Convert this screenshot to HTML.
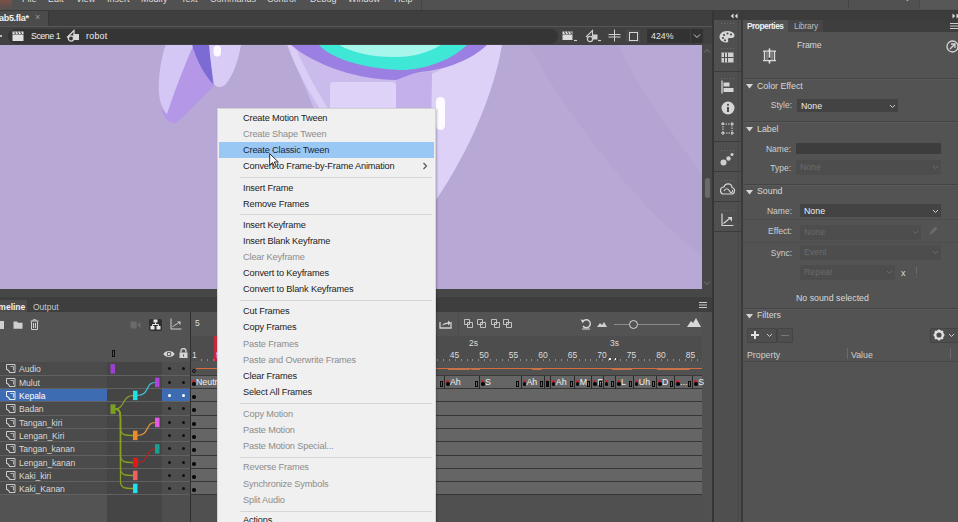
<!DOCTYPE html>
<html><head><meta charset="utf-8">
<style>
*{margin:0;padding:0;box-sizing:border-box}
html,body{width:958px;height:522px;overflow:hidden;background:#535353;font-family:"Liberation Sans",sans-serif;color:#d6d6d6}
.a{position:absolute}
.t{position:absolute;white-space:nowrap;line-height:1}
</style></head><body>


<!-- menu bar -->
<div class="a" style="left:0;top:0;width:958px;height:10px;background:#515151;overflow:hidden">
 <div class="a" style="left:0;top:0;width:12px;height:9px;background:linear-gradient(#7a5048,#55504e)"></div>
 <div class="t" style="left:22px;top:-5px;font-size:9px;color:#dedede">File</div>
 <div class="t" style="left:48px;top:-5px;font-size:9px;color:#dedede">Edit</div>
 <div class="t" style="left:76px;top:-5px;font-size:9px;color:#dedede">View</div>
 <div class="t" style="left:107px;top:-5px;font-size:9px;color:#dedede">Insert</div>
 <div class="t" style="left:141px;top:-5px;font-size:9px;color:#dedede">Modify</div>
 <div class="t" style="left:181px;top:-5px;font-size:9px;color:#dedede">Text</div>
 <div class="t" style="left:210px;top:-5px;font-size:9px;color:#dedede">Commands</div>
 <div class="t" style="left:267px;top:-5px;font-size:9px;color:#dedede">Control</div>
 <div class="t" style="left:310px;top:-5px;font-size:9px;color:#dedede">Debug</div>
 <div class="t" style="left:348px;top:-5px;font-size:9px;color:#dedede">Window</div>
 <div class="t" style="left:394px;top:-5px;font-size:9px;color:#dedede">Help</div>
 <div class="a" style="left:421px;top:0;width:1px;height:10px;background:#444"></div>
 <div class="a" style="left:848px;top:0;width:1px;height:8px;background:#444"></div>
 <div class="t" style="left:858px;top:-7px;font-size:9px;color:#e8e8e8;font-weight:bold">Essentials</div>
 <div class="t" style="left:904px;top:-5px;font-size:8px;color:#bbb">&#8964;</div>
 <div class="a" style="left:919px;top:0;width:39px;height:9px;background:#575757;border-left:1px solid #4a4a4a"></div>
</div>
<div class="a" style="left:0;top:10px;width:958px;height:1px;background:#3a3a3a"></div>

<!-- doc tab bar -->
<div class="a" style="left:0;top:11px;width:712px;height:15px;background:#3f3f3f"></div>
<div class="a" style="left:0;top:11px;width:48px;height:15px;background:#4b4b4b"></div>
<div class="a" style="left:48px;top:11px;width:1px;height:15px;background:#383838"></div>
<div class="t" style="left:-1px;top:14.2px;font-size:9px;color:#f0f0f0;font-weight:bold;letter-spacing:-0.3px">ab5.fla*</div>
<div class="t" style="left:35px;top:13px;font-size:9px;color:#9a9a9a">&#215;</div>
<!-- tool strip top -->
<div class="a" style="left:712px;top:11px;width:246px;height:9px;background:#3c3c3c"></div>
<svg class="a" style="left:730px;top:12.5px" width="8" height="6" viewBox="0 0 8 6"><path d="M3.5 0.5L0.8 3l2.7 2.5zM7.5 0.5L4.8 3l2.7 2.5z" fill="#e0e0e0"/></svg>
<svg class="a" style="left:952px;top:12.5px" width="8" height="6" viewBox="0 0 8 6"><path d="M0.5 0.5L3.2 3 0.5 5.5zM4.5 0.5L7.2 3 4.5 5.5z" fill="#e0e0e0"/></svg>

<!-- breadcrumb bar -->
<div class="a" style="left:0;top:26px;width:712px;height:1px;background:#575757"></div>
<div class="a" style="left:0;top:27px;width:712px;height:17.5px;background:#414141"></div>
<div class="a" style="left:8px;top:28.5px;width:550px;height:15px;background:#353535;border-radius:8px"></div>
<div class="a" style="left:0;top:35px;width:2px;height:2px;background:#bbb"></div>
<svg class="a" style="left:12px;top:30px" width="12" height="12" viewBox="0 0 12 12">
 <path d="M0.5 4.5h11v6.5h-11z" fill="#e0e0e0"/>
 <path d="M0.5 1.5h11v2.5h-11z" fill="#e0e0e0"/>
 <path d="M2.5 1.5l1 2.5M5.5 1.5l1 2.5M8.5 1.5l1 2.5" stroke="#3a3a3a" stroke-width="1"/>
</svg>
<div class="t" style="left:31px;top:31.5px;font-size:8.8px;color:#f0f0f0;letter-spacing:-0.45px">Scene 1</div>
<svg class="a" style="left:66px;top:29px" width="14" height="13" viewBox="0 0 14 13">
 <path d="M1 8.5L8 1.5v6" fill="none" stroke="#d8d8d8" stroke-width="1.2"/>
 <circle cx="5" cy="9.5" r="2.6" fill="none" stroke="#d8d8d8" stroke-width="1.3"/>
 <path d="M7.5 5h5.5v6h-5.5z" fill="#d8d8d8"/>
</svg>
<div class="t" style="left:86px;top:31.5px;font-size:8.8px;color:#f0f0f0;letter-spacing:0.3px">robot</div>

<!-- stage header right icons -->
<svg class="a" style="left:561px;top:29px" width="17" height="14" viewBox="0 0 17 14">
 <path d="M1.5 5.5h10v5.5h-10z" fill="#dcdcdc"/>
 <path d="M1.5 2.5h10v2.5h-10z" fill="#dcdcdc"/>
 <path d="M3.5 2.5l1 2.5M6.5 2.5l1 2.5M9.5 2.5l1 2.5" stroke="#3a3a3a" stroke-width="1"/>
 <path d="M13 11.5h3" stroke="#d0d0d0" stroke-width="1.2"/>
</svg>
<svg class="a" style="left:585px;top:29px" width="17" height="14" viewBox="0 0 17 14">
 <path d="M1 8L7.5 1.5v6" fill="none" stroke="#d0d0d0" stroke-width="1.1"/>
 <circle cx="5" cy="10" r="2.6" fill="none" stroke="#d0d0d0" stroke-width="1.2"/>
 <path d="M7.5 5.5h5v5h-5z" fill="#d0d0d0"/>
 <path d="M13 11.5h3" stroke="#d0d0d0" stroke-width="1.2"/>
</svg>
<svg class="a" style="left:608px;top:29px" width="13" height="13" viewBox="0 0 13 13">
 <path d="M0.5 5.5h12M0.5 8h12M6.5 0.5v12" stroke="#d0d0d0" stroke-width="1"/>
</svg>
<div class="a" style="left:626px;top:30px;width:14px;height:12px;background:#4a4a4a"></div>
<div class="a" style="left:628.5px;top:32px;width:9px;height:8.5px;border:1.2px solid #d6d6d6;background:#444"></div>
<div class="a" style="left:647px;top:29px;width:56px;height:14px;background:#323232"></div>
<div class="a" style="left:690px;top:29px;width:1px;height:14px;background:#3e3e3e"></div>
<div class="t" style="left:651px;top:32px;font-size:8.8px;color:#e6e6e6">424%</div>
<svg class="a" style="left:693px;top:33px" width="8" height="6" viewBox="0 0 8 6"><path d="M1 1.5l3 3 3-3" fill="none" stroke="#cfcfcf" stroke-width="1"/></svg>

<!-- stage -->
<div class="a" style="left:0;top:44.5px;width:702px;height:244.5px;background:#b8a8d6;overflow:hidden">
<svg class="a" style="left:0;top:-0.5px" width="702" height="245" viewBox="0 44 702 245">
 <path d="M528 44 C570 120 640 210 702 255 L702 175 C670 130 640 90 617 44Z" fill="#b4a4d4"/>
 <!-- left limb -->
 <path d="M184 44 L228 44 L214 86 C200 100 186 114 176 123 C169 124 164 118 162 110 Z" fill="#b597e7"/>
 <path d="M166 44 L194 44 C186 62 177 84 167 114 C160 107 158 95 159 80 C160 65 163 52 166 44 Z" fill="#d5c7f5"/>
 <path d="M192 44 L210 44 L213 84 C204 74 196 60 192 44Z" fill="#7c6ad5"/>
 <path d="M209 44 L241 44 C239 58 234 74 226 84 C222 88 216 88 214 84 C212 72 210 58 209 44 Z" fill="#d8ccf7"/>
 <rect x="213.5" y="45.5" width="7.5" height="11" rx="3.7" fill="#fbf8ff"/>
 <!-- body -->
 <path d="M287 44 L502 44 C495 90 470 150 436 200 L350 200 C335 160 315 110 287 44Z" fill="#cbbaec"/>
 <path d="M287 44 L294 44 C305 70 318 92 330 112 L322 112 C308 90 296 70 287 44Z" fill="#dacdf6"/>
 <path d="M432 74 C452 64 472 52 478 44 L502 44 C495 90 470 150 436 200 L430 200 C430 150 430 100 432 74Z" fill="#ddd1f7"/>
 <path d="M396 74 L432 72 L430 200 L396 200Z" fill="#c4b0ea"/>
 <path d="M334 82 L392 82 Q396 82 396 86 L396 200 L330 200 L330 86 Q330 82 334 82Z" fill="#ded2f8"/>
 <!-- ring -->
 <path d="M290 44 L488 44 C472 60 445 70 420 72 C410 74 402 78 396 80 C360 80 315 66 290 44Z" fill="#9b7fe3"/>
 <path d="M318 44 L468 44 C452 60 425 70 400 70 C360 68 330 58 318 44Z" fill="#3fe8d6"/>
 <path d="M338 44 L442 44 C430 52 415 57 395 57 C370 57 350 52 338 44Z" fill="#a6f6ec"/>
 <rect x="436" y="97" width="9" height="33" rx="4.5" fill="#fdfbff"/>
</svg>
</div>

<!-- v scroll -->
<div class="a" style="left:702px;top:44px;width:10px;height:245px;background:#474747"></div>
<svg class="a" style="left:703px;top:48px" width="8" height="6" viewBox="0 0 8 6"><path d="M1 4.5l3-3 3 3" fill="none" stroke="#777" stroke-width="1"/></svg>
<div class="a" style="left:704.5px;top:178px;width:5px;height:20px;background:#6a6a6a;border-radius:2.5px"></div>
<svg class="a" style="left:703px;top:280px" width="8" height="6" viewBox="0 0 8 6"><path d="M1 1.5l3 3 3-3" fill="none" stroke="#777" stroke-width="1"/></svg>
<!-- timeline panel -->
<div class="a" style="left:0;top:289px;width:712px;height:8px;background:#474747"></div>
<div class="a" style="left:0;top:297px;width:712px;height:15px;background:#3e3e3e"></div>
<div class="a" style="left:0;top:300px;width:27px;height:12px;background:#4c4c4c"></div>
<div class="t" style="left:-4px;top:302.5px;font-size:8.5px;color:#f2f2f2;font-weight:bold">imeline</div>
<div class="t" style="left:33px;top:302.5px;font-size:8.5px;color:#c8c8c8">Output</div>
<div class="a" style="left:699px;top:302px;width:8px;height:1.2px;background:#ccc;box-shadow:0 2.5px 0 #ccc,0 5px 0 #ccc"></div>
<div class="a" style="left:0;top:312px;width:712px;height:210px;background:#535353"></div>
<div class="a" style="left:702px;top:312px;width:10px;height:210px;background:#515151"></div>
<div class="a" style="left:0;top:321px;width:4px;height:8px;background:#cfcfcf"></div>
<svg class="a" style="left:13px;top:320px" width="10" height="9" viewBox="0 0 10 9"><path d="M0.5 1.5h3.5l1 1.2h4.5v6H0.5z" fill="#cfcfcf"/></svg>
<svg class="a" style="left:30px;top:319px" width="9" height="11" viewBox="0 0 9 11"><path d="M0.5 2h8M3 2V0.8h3V2M1.5 2.5v8h6v-8M3.5 4v5M5.5 4v5" fill="none" stroke="#cfcfcf" stroke-width="1"/></svg>
<svg class="a" style="left:130px;top:321px" width="11" height="8" viewBox="0 0 11 8"><path d="M0.5 0.5h6v7h-6zM7 4l3.5-3v6z" fill="#6a6a6a"/></svg>
<div class="a" style="left:149px;top:318.5px;width:13px;height:12.5px;background:#2e2e2e;border-radius:2px"></div>
<svg class="a" style="left:150px;top:319px" width="11" height="11" viewBox="0 0 11 11"><path d="M3.5 0.5h4v3h-4zM0.5 7h4v3.5h-4zM6.5 7h4v3.5h-4z" fill="#e8e8e8"/><path d="M5.5 3.5v2M2.5 7V5.5h6V7" fill="none" stroke="#e8e8e8" stroke-width="1"/></svg>
<svg class="a" style="left:170px;top:318px" width="12" height="12" viewBox="0 0 12 12"><path d="M1 0.5v10.5h10.5" fill="none" stroke="#cfcfcf" stroke-width="1"/><path d="M2.5 9C4 7 6 6.5 8 5.5" fill="none" stroke="#cfcfcf" stroke-width="1"/><path d="M7 3.5h3.5V7z" fill="#cfcfcf"/></svg>
<div class="a" style="left:190px;top:312px;width:1px;height:210px;background:#2f2f2f"></div>
<div class="t" style="left:195px;top:319px;font-size:8.5px;color:#dcdcdc">5</div>
<svg class="a" style="left:439px;top:318px" width="13" height="11" viewBox="0 0 13 11"><path d="M1 4v6h11V4" fill="none" stroke="#cfcfcf" stroke-width="1.3"/><path d="M3 8C4 5 6 4.5 9 4.5V2.5l3 2.5-3 2.5V6C7 6 5 6.5 3 8z" fill="#cfcfcf"/></svg>
<div class="a" style="left:458px;top:313px;width:1px;height:22px;background:#4a4a4a"></div>
<svg class="a" style="left:464px;top:319px" width="9" height="9" viewBox="0 0 9 9"><path d="M0.5 0.5h5v5h-5zM3.5 3.5h5v5h-5z" fill="none" stroke="#cfcfcf" stroke-width="0.9"/></svg>
<svg class="a" style="left:477px;top:319px" width="9" height="9" viewBox="0 0 9 9"><path d="M0.5 0.5h5v5h-5zM3.5 3.5h5v5h-5z" fill="none" stroke="#cfcfcf" stroke-width="0.9"/></svg>
<svg class="a" style="left:491px;top:319px" width="9" height="9" viewBox="0 0 9 9"><path d="M0.5 0.5h5v5h-5zM3.5 3.5h5v5h-5z" fill="none" stroke="#cfcfcf" stroke-width="0.9"/></svg>
<svg class="a" style="left:503px;top:319px" width="9" height="9" viewBox="0 0 9 9"><path d="M0.5 0.5h5v5h-5zM3.5 3.5h5v5h-5z" fill="none" stroke="#cfcfcf" stroke-width="0.9"/></svg>
<svg class="a" style="left:580px;top:317px" width="12" height="13" viewBox="0 0 12 13"><path d="M3 4.5A4 4 0 1 1 3 9" fill="none" stroke="#d6d6d6" stroke-width="1.4"/><path d="M0.5 2.5l3.5 0.5-1 3.5z" fill="#d6d6d6"/><path d="M2 12h8" stroke="#d6d6d6" stroke-width="1"/></svg>
<svg class="a" style="left:597px;top:321px" width="10" height="6" viewBox="0 0 10 6"><path d="M0 6L3 2l2 2 2-3 3 5z" fill="#cfcfcf"/></svg>
<div class="a" style="left:614px;top:323.5px;width:66px;height:1.2px;background:#8a8a8a"></div>
<div class="a" style="left:628.5px;top:319.5px;width:9px;height:9px;border-radius:50%;border:1.6px solid #d8d8d8;background:#535353"></div>
<svg class="a" style="left:687px;top:318px" width="14" height="9" viewBox="0 0 14 9"><path d="M0 9L4 3l2 2 3-5 5 9z" fill="#d8d8d8"/></svg>
<div class="a" style="left:191px;top:336px;width:511px;height:25px;background:#4d4d4d"></div>
<div class="t" style="left:469px;top:339px;font-size:8.5px;color:#dcdcdc">2s</div>
<div class="t" style="left:610px;top:339px;font-size:8.5px;color:#dcdcdc">3s</div>
<div class="t" style="left:192px;top:351px;font-size:8.5px;color:#dcdcdc">1</div>
<div class="t" style="left:449.7px;top:351px;font-size:8.5px;color:#dcdcdc">45</div>
<div class="t" style="left:479.2px;top:351px;font-size:8.5px;color:#dcdcdc">50</div>
<div class="t" style="left:508.7px;top:351px;font-size:8.5px;color:#dcdcdc">55</div>
<div class="t" style="left:538.2px;top:351px;font-size:8.5px;color:#dcdcdc">60</div>
<div class="t" style="left:567.7px;top:351px;font-size:8.5px;color:#dcdcdc">65</div>
<div class="t" style="left:597.2px;top:351px;font-size:8.5px;color:#dcdcdc">70</div>
<div class="t" style="left:626.7px;top:351px;font-size:8.5px;color:#dcdcdc">75</div>
<div class="t" style="left:656.2px;top:351px;font-size:8.5px;color:#dcdcdc">80</div>
<div class="t" style="left:685.7px;top:351px;font-size:8.5px;color:#dcdcdc">85</div>
<div class="a" style="left:201.0px;top:359px;width:1px;height:1.5px;background:#8c8c8c"></div><div class="a" style="left:206.9px;top:359px;width:1px;height:1.5px;background:#8c8c8c"></div><div class="a" style="left:212.8px;top:359px;width:1px;height:1.5px;background:#8c8c8c"></div><div class="a" style="left:218.7px;top:359px;width:1px;height:1.5px;background:#8c8c8c"></div><div class="a" style="left:224.6px;top:359px;width:1px;height:1.5px;background:#8c8c8c"></div><div class="a" style="left:230.5px;top:359px;width:1px;height:1.5px;background:#8c8c8c"></div><div class="a" style="left:236.4px;top:359px;width:1px;height:1.5px;background:#8c8c8c"></div><div class="a" style="left:242.3px;top:359px;width:1px;height:1.5px;background:#8c8c8c"></div><div class="a" style="left:248.2px;top:359px;width:1px;height:1.5px;background:#8c8c8c"></div><div class="a" style="left:254.1px;top:359px;width:1px;height:1.5px;background:#8c8c8c"></div><div class="a" style="left:260.0px;top:359px;width:1px;height:1.5px;background:#8c8c8c"></div><div class="a" style="left:265.9px;top:359px;width:1px;height:1.5px;background:#8c8c8c"></div><div class="a" style="left:271.8px;top:359px;width:1px;height:1.5px;background:#8c8c8c"></div><div class="a" style="left:277.7px;top:359px;width:1px;height:1.5px;background:#8c8c8c"></div><div class="a" style="left:283.6px;top:359px;width:1px;height:1.5px;background:#8c8c8c"></div><div class="a" style="left:289.5px;top:359px;width:1px;height:1.5px;background:#8c8c8c"></div><div class="a" style="left:295.4px;top:359px;width:1px;height:1.5px;background:#8c8c8c"></div><div class="a" style="left:301.3px;top:359px;width:1px;height:1.5px;background:#8c8c8c"></div><div class="a" style="left:307.2px;top:359px;width:1px;height:1.5px;background:#8c8c8c"></div><div class="a" style="left:313.1px;top:359px;width:1px;height:1.5px;background:#8c8c8c"></div><div class="a" style="left:319.0px;top:359px;width:1px;height:1.5px;background:#8c8c8c"></div><div class="a" style="left:324.9px;top:359px;width:1px;height:1.5px;background:#8c8c8c"></div><div class="a" style="left:330.8px;top:359px;width:1px;height:1.5px;background:#8c8c8c"></div><div class="a" style="left:336.7px;top:359px;width:1px;height:1.5px;background:#8c8c8c"></div><div class="a" style="left:342.6px;top:359px;width:1px;height:1.5px;background:#8c8c8c"></div><div class="a" style="left:348.5px;top:359px;width:1px;height:1.5px;background:#8c8c8c"></div><div class="a" style="left:354.4px;top:359px;width:1px;height:1.5px;background:#8c8c8c"></div><div class="a" style="left:360.3px;top:359px;width:1px;height:1.5px;background:#8c8c8c"></div><div class="a" style="left:366.2px;top:359px;width:1px;height:1.5px;background:#8c8c8c"></div><div class="a" style="left:372.1px;top:359px;width:1px;height:1.5px;background:#8c8c8c"></div><div class="a" style="left:378.0px;top:359px;width:1px;height:1.5px;background:#8c8c8c"></div><div class="a" style="left:383.9px;top:359px;width:1px;height:1.5px;background:#8c8c8c"></div><div class="a" style="left:389.8px;top:359px;width:1px;height:1.5px;background:#8c8c8c"></div><div class="a" style="left:395.7px;top:359px;width:1px;height:1.5px;background:#8c8c8c"></div><div class="a" style="left:401.6px;top:359px;width:1px;height:1.5px;background:#8c8c8c"></div><div class="a" style="left:407.5px;top:359px;width:1px;height:1.5px;background:#8c8c8c"></div><div class="a" style="left:413.4px;top:359px;width:1px;height:1.5px;background:#8c8c8c"></div><div class="a" style="left:419.3px;top:359px;width:1px;height:1.5px;background:#8c8c8c"></div><div class="a" style="left:425.2px;top:359px;width:1px;height:1.5px;background:#8c8c8c"></div><div class="a" style="left:431.1px;top:359px;width:1px;height:1.5px;background:#8c8c8c"></div><div class="a" style="left:437.0px;top:359px;width:1px;height:1.5px;background:#8c8c8c"></div><div class="a" style="left:442.9px;top:359px;width:1px;height:1.5px;background:#8c8c8c"></div><div class="a" style="left:448.8px;top:359px;width:1px;height:1.5px;background:#8c8c8c"></div><div class="a" style="left:454.7px;top:359px;width:1px;height:1.5px;background:#8c8c8c"></div><div class="a" style="left:460.6px;top:359px;width:1px;height:1.5px;background:#8c8c8c"></div><div class="a" style="left:466.5px;top:359px;width:1px;height:1.5px;background:#8c8c8c"></div><div class="a" style="left:472.4px;top:359px;width:1px;height:1.5px;background:#8c8c8c"></div><div class="a" style="left:478.3px;top:359px;width:1px;height:1.5px;background:#8c8c8c"></div><div class="a" style="left:484.2px;top:359px;width:1px;height:1.5px;background:#8c8c8c"></div><div class="a" style="left:490.1px;top:359px;width:1px;height:1.5px;background:#8c8c8c"></div><div class="a" style="left:496.0px;top:359px;width:1px;height:1.5px;background:#8c8c8c"></div><div class="a" style="left:501.9px;top:359px;width:1px;height:1.5px;background:#8c8c8c"></div><div class="a" style="left:507.8px;top:359px;width:1px;height:1.5px;background:#8c8c8c"></div><div class="a" style="left:513.7px;top:359px;width:1px;height:1.5px;background:#8c8c8c"></div><div class="a" style="left:519.6px;top:359px;width:1px;height:1.5px;background:#8c8c8c"></div><div class="a" style="left:525.5px;top:359px;width:1px;height:1.5px;background:#8c8c8c"></div><div class="a" style="left:531.4px;top:359px;width:1px;height:1.5px;background:#8c8c8c"></div><div class="a" style="left:537.3px;top:359px;width:1px;height:1.5px;background:#8c8c8c"></div><div class="a" style="left:543.2px;top:359px;width:1px;height:1.5px;background:#8c8c8c"></div><div class="a" style="left:549.1px;top:359px;width:1px;height:1.5px;background:#8c8c8c"></div><div class="a" style="left:555.0px;top:359px;width:1px;height:1.5px;background:#8c8c8c"></div><div class="a" style="left:560.9px;top:359px;width:1px;height:1.5px;background:#8c8c8c"></div><div class="a" style="left:566.8px;top:359px;width:1px;height:1.5px;background:#8c8c8c"></div><div class="a" style="left:572.7px;top:359px;width:1px;height:1.5px;background:#8c8c8c"></div><div class="a" style="left:578.6px;top:359px;width:1px;height:1.5px;background:#8c8c8c"></div><div class="a" style="left:584.5px;top:359px;width:1px;height:1.5px;background:#8c8c8c"></div><div class="a" style="left:590.4px;top:359px;width:1px;height:1.5px;background:#8c8c8c"></div><div class="a" style="left:596.3px;top:359px;width:1px;height:1.5px;background:#8c8c8c"></div><div class="a" style="left:602.2px;top:359px;width:1px;height:1.5px;background:#8c8c8c"></div><div class="a" style="left:608.1px;top:359px;width:1px;height:1.5px;background:#8c8c8c"></div><div class="a" style="left:614.0px;top:359px;width:1px;height:1.5px;background:#8c8c8c"></div><div class="a" style="left:619.9px;top:359px;width:1px;height:1.5px;background:#8c8c8c"></div><div class="a" style="left:625.8px;top:359px;width:1px;height:1.5px;background:#8c8c8c"></div><div class="a" style="left:631.7px;top:359px;width:1px;height:1.5px;background:#8c8c8c"></div><div class="a" style="left:637.6px;top:359px;width:1px;height:1.5px;background:#8c8c8c"></div><div class="a" style="left:643.5px;top:359px;width:1px;height:1.5px;background:#8c8c8c"></div><div class="a" style="left:649.4px;top:359px;width:1px;height:1.5px;background:#8c8c8c"></div><div class="a" style="left:655.3px;top:359px;width:1px;height:1.5px;background:#8c8c8c"></div><div class="a" style="left:661.2px;top:359px;width:1px;height:1.5px;background:#8c8c8c"></div><div class="a" style="left:667.1px;top:359px;width:1px;height:1.5px;background:#8c8c8c"></div><div class="a" style="left:673.0px;top:359px;width:1px;height:1.5px;background:#8c8c8c"></div><div class="a" style="left:678.9px;top:359px;width:1px;height:1.5px;background:#8c8c8c"></div><div class="a" style="left:684.8px;top:359px;width:1px;height:1.5px;background:#8c8c8c"></div><div class="a" style="left:690.7px;top:359px;width:1px;height:1.5px;background:#8c8c8c"></div><div class="a" style="left:696.6px;top:359px;width:1px;height:1.5px;background:#8c8c8c"></div>
<div class="a" style="left:609px;top:358px;width:1.5px;height:2px;background:#f0f0f0"></div><div class="a" style="left:614.5px;top:358px;width:1.5px;height:2px;background:#f0f0f0"></div>
<div class="a" style="left:214px;top:336px;width:10px;height:25px;background:#c8283c"></div>
<div class="t" style="left:216px;top:351px;font-size:8.5px;color:#f4f4f4">5</div>
<div class="a" style="left:111.5px;top:349.5px;width:3.5px;height:7.5px;border:1px solid #111"></div>
<svg class="a" style="left:162.5px;top:349.5px" width="12" height="8" viewBox="0 0 12 8"><path d="M0.3 4C2.5 0 9.5 0 11.7 4C9.5 8 2.5 8 0.3 4z" fill="#d8d8d8"/><circle cx="6" cy="4" r="2.3" fill="#535353"/><circle cx="6" cy="4" r="1.3" fill="#d8d8d8"/></svg>
<svg class="a" style="left:179px;top:348px" width="9" height="10" viewBox="0 0 9 10"><path d="M2 4.5V3a2.5 2.5 0 0 1 5 0v1.5" fill="none" stroke="#d6d6d6" stroke-width="1.3"/><rect x="0.5" y="4.5" width="8" height="5.5" fill="#d6d6d6"/><rect x="4" y="6.5" width="1" height="2" fill="#535353"/></svg>
<div class="a" style="left:0;top:361.5px;width:107px;height:133px;background:#4b4b4b"></div>
<div class="a" style="left:107px;top:361.5px;width:55px;height:160.5px;background:#454545"></div>
<div class="a" style="left:162px;top:361.5px;width:28px;height:160.5px;background:#4e4e4e"></div>
<div class="a" style="left:191px;top:361.5px;width:511px;height:160.5px;background:#505050"></div>
<div class="a" style="left:0;top:375px;width:190px;height:1px;background:#616161"></div>
<svg class="a" style="left:6px;top:364.0px" width="10" height="9" viewBox="0 0 10 9"><path d="M0.5 0.5h8.5v8h-5.5C3 6.5 1.5 5.5 0.5 5.5z" fill="none" stroke="#d8d8d8" stroke-width="0.9"/><path d="M0.8 5.5C2.5 5.5 3.5 7 3.5 8.5" fill="none" stroke="#d8d8d8" stroke-width="0.9"/><path d="M4.5 2.5h3v4" fill="none" stroke="#d8d8d8" stroke-width="0.7"/></svg>
<div class="t" style="left:19px;top:365.1px;font-size:8.6px;color:#d8d8d8;letter-spacing:-0.05px">Audio</div>
<div class="a" style="left:167.5px;top:366.5px;width:3px;height:3px;border-radius:50%;background:#111"></div>
<div class="a" style="left:181.5px;top:366.5px;width:3px;height:3px;border-radius:50%;background:#111"></div>
<div class="a" style="left:191px;top:361.5px;width:511px;height:14.0px;background:#515151"></div>
<div class="a" style="left:196px;top:368.1px;width:506px;height:1.3px;background:#d86c3c"></div>
<div class="a" style="left:448px;top:367.6px;width:22px;height:2.2px;background:#c8744a;border-radius:1px"></div>
<div class="a" style="left:471px;top:367.6px;width:9px;height:2.2px;background:#c8744a;border-radius:1px"></div>
<div class="a" style="left:612px;top:367.6px;width:20px;height:2.2px;background:#c8744a;border-radius:1px"></div>
<div class="a" style="left:657px;top:367.6px;width:33px;height:2.2px;background:#c8744a;border-radius:1px"></div>
<div class="a" style="left:532px;top:367.6px;width:10px;height:2.2px;background:#c8744a;border-radius:1px"></div>
<div class="a" style="left:192px;top:369.0px;width:4px;height:4px;border-radius:50%;border:1px solid #111"></div>
<div class="a" style="left:191px;top:375px;width:511px;height:1px;background:#3a3a3a"></div>
<div class="a" style="left:0;top:388px;width:190px;height:1px;background:#616161"></div>
<svg class="a" style="left:6px;top:378.0px" width="10" height="9" viewBox="0 0 10 9"><path d="M0.5 0.5h8.5v8h-5.5C3 6.5 1.5 5.5 0.5 5.5z" fill="none" stroke="#d8d8d8" stroke-width="0.9"/><path d="M0.8 5.5C2.5 5.5 3.5 7 3.5 8.5" fill="none" stroke="#d8d8d8" stroke-width="0.9"/><path d="M4.5 2.5h3v4" fill="none" stroke="#d8d8d8" stroke-width="0.7"/></svg>
<div class="t" style="left:19px;top:379.1px;font-size:8.6px;color:#d8d8d8;letter-spacing:-0.05px">Mulut</div>
<div class="a" style="left:167.5px;top:380.5px;width:3px;height:3px;border-radius:50%;background:#111"></div>
<div class="a" style="left:181.5px;top:380.5px;width:3px;height:3px;border-radius:50%;background:#111"></div>
<div class="a" style="left:191px;top:375.5px;width:511px;height:13.0px;background:#656565"></div>
<div class="a" style="left:191px;top:388px;width:511px;height:1px;background:#363636"></div>
<div class="a" style="left:192px;top:379.5px;width:3px;height:3px;border-radius:50%;background:#d0202a"></div>
<div class="a" style="left:192px;top:382.0px;width:3.5px;height:3.5px;border-radius:50%;background:#0a0a0a"></div>
<div class="t" style="left:196px;top:377.8px;font-size:8.8px;color:#f0f0f0">Neutral</div>
<div class="a" style="left:439.7px;top:381.3px;width:3.2px;height:5.5px;border:1px solid #0a0a0a"></div>
<div class="a" style="left:444.0px;top:375.5px;width:1px;height:13.0px;background:#2a2a2a"></div>
<div class="a" style="left:446.0px;top:379.5px;width:3px;height:3px;border-radius:50%;background:#d0202a"></div>
<div class="a" style="left:446.0px;top:382.0px;width:3.5px;height:3.5px;border-radius:50%;background:#0a0a0a"></div>
<div class="t" style="left:450.0px;top:377.8px;font-size:8.8px;color:#f0f0f0">Ah</div>
<div class="a" style="left:474.7px;top:381.3px;width:3.2px;height:5.5px;border:1px solid #0a0a0a"></div>
<div class="a" style="left:479.0px;top:375.5px;width:1px;height:13.0px;background:#2a2a2a"></div>
<div class="a" style="left:481.0px;top:379.5px;width:3px;height:3px;border-radius:50%;background:#d0202a"></div>
<div class="a" style="left:481.0px;top:382.0px;width:3.5px;height:3.5px;border-radius:50%;background:#0a0a0a"></div>
<div class="t" style="left:485.0px;top:377.8px;font-size:8.8px;color:#f0f0f0">S</div>
<div class="a" style="left:516.2px;top:381.3px;width:3.2px;height:5.5px;border:1px solid #0a0a0a"></div>
<div class="a" style="left:520.5px;top:375.5px;width:1px;height:13.0px;background:#2a2a2a"></div>
<div class="a" style="left:522.5px;top:379.5px;width:3px;height:3px;border-radius:50%;background:#d0202a"></div>
<div class="a" style="left:522.5px;top:382.0px;width:3.5px;height:3.5px;border-radius:50%;background:#0a0a0a"></div>
<div class="t" style="left:526.5px;top:377.8px;font-size:8.8px;color:#f0f0f0">Ah</div>
<div class="a" style="left:539.6px;top:381.3px;width:3.2px;height:5.5px;border:1px solid #0a0a0a"></div>
<div class="a" style="left:543.9px;top:375.5px;width:1px;height:13.0px;background:#2a2a2a"></div>
<div class="a" style="left:545.9px;top:379.5px;width:3px;height:3px;border-radius:50%;background:#d0202a"></div>
<div class="a" style="left:545.9px;top:382.0px;width:3.5px;height:3.5px;border-radius:50%;background:#0a0a0a"></div>
<div class="a" style="left:545.5px;top:381.3px;width:3.2px;height:5.5px;border:1px solid #0a0a0a"></div>
<div class="a" style="left:549.8px;top:375.5px;width:1px;height:13.0px;background:#2a2a2a"></div>
<div class="a" style="left:551.8px;top:379.5px;width:3px;height:3px;border-radius:50%;background:#d0202a"></div>
<div class="a" style="left:551.8px;top:382.0px;width:3.5px;height:3.5px;border-radius:50%;background:#0a0a0a"></div>
<div class="t" style="left:555.8px;top:377.8px;font-size:8.8px;color:#f0f0f0">Ah</div>
<div class="a" style="left:569.5px;top:381.3px;width:3.2px;height:5.5px;border:1px solid #0a0a0a"></div>
<div class="a" style="left:573.8px;top:375.5px;width:1px;height:13.0px;background:#2a2a2a"></div>
<div class="a" style="left:575.8px;top:379.5px;width:3px;height:3px;border-radius:50%;background:#d0202a"></div>
<div class="a" style="left:575.8px;top:382.0px;width:3.5px;height:3.5px;border-radius:50%;background:#0a0a0a"></div>
<div class="t" style="left:579.8px;top:377.8px;font-size:8.8px;color:#f0f0f0">M</div>
<div class="a" style="left:587.1px;top:381.3px;width:3.2px;height:5.5px;border:1px solid #0a0a0a"></div>
<div class="a" style="left:591.4px;top:375.5px;width:1px;height:13.0px;background:#2a2a2a"></div>
<div class="a" style="left:593.4px;top:379.5px;width:3px;height:3px;border-radius:50%;background:#d0202a"></div>
<div class="a" style="left:593.4px;top:382.0px;width:3.5px;height:3.5px;border-radius:50%;background:#0a0a0a"></div>
<div class="t" style="left:597.4px;top:377.8px;font-size:8.8px;color:#f0f0f0">F</div>
<div class="a" style="left:598.6px;top:381.3px;width:3.2px;height:5.5px;border:1px solid #0a0a0a"></div>
<div class="a" style="left:602.9px;top:375.5px;width:1px;height:13.0px;background:#2a2a2a"></div>
<div class="a" style="left:604.9px;top:379.5px;width:3px;height:3px;border-radius:50%;background:#d0202a"></div>
<div class="a" style="left:604.9px;top:382.0px;width:3.5px;height:3.5px;border-radius:50%;background:#0a0a0a"></div>
<div class="a" style="left:610.7px;top:381.3px;width:3.2px;height:5.5px;border:1px solid #0a0a0a"></div>
<div class="a" style="left:615.0px;top:375.5px;width:1px;height:13.0px;background:#2a2a2a"></div>
<div class="a" style="left:617.0px;top:379.5px;width:3px;height:3px;border-radius:50%;background:#d0202a"></div>
<div class="a" style="left:617.0px;top:382.0px;width:3.5px;height:3.5px;border-radius:50%;background:#0a0a0a"></div>
<div class="t" style="left:621.0px;top:377.8px;font-size:8.8px;color:#f0f0f0">L</div>
<div class="a" style="left:628.5px;top:381.3px;width:3.2px;height:5.5px;border:1px solid #0a0a0a"></div>
<div class="a" style="left:632.8px;top:375.5px;width:1px;height:13.0px;background:#2a2a2a"></div>
<div class="a" style="left:634.8px;top:379.5px;width:3px;height:3px;border-radius:50%;background:#d0202a"></div>
<div class="a" style="left:634.8px;top:382.0px;width:3.5px;height:3.5px;border-radius:50%;background:#0a0a0a"></div>
<div class="t" style="left:638.8px;top:377.8px;font-size:8.8px;color:#f0f0f0">Uh</div>
<div class="a" style="left:651.7px;top:381.3px;width:3.2px;height:5.5px;border:1px solid #0a0a0a"></div>
<div class="a" style="left:656.0px;top:375.5px;width:1px;height:13.0px;background:#2a2a2a"></div>
<div class="a" style="left:658.0px;top:379.5px;width:3px;height:3px;border-radius:50%;background:#d0202a"></div>
<div class="a" style="left:658.0px;top:382.0px;width:3.5px;height:3.5px;border-radius:50%;background:#0a0a0a"></div>
<div class="t" style="left:662.0px;top:377.8px;font-size:8.8px;color:#f0f0f0">D</div>
<div class="a" style="left:669.8px;top:381.3px;width:3.2px;height:5.5px;border:1px solid #0a0a0a"></div>
<div class="a" style="left:674.1px;top:375.5px;width:1px;height:13.0px;background:#2a2a2a"></div>
<div class="a" style="left:676.1px;top:379.5px;width:3px;height:3px;border-radius:50%;background:#d0202a"></div>
<div class="a" style="left:676.1px;top:382.0px;width:3.5px;height:3.5px;border-radius:50%;background:#0a0a0a"></div>
<div class="t" style="left:680.1px;top:377.8px;font-size:8.8px;color:#f0f0f0">...</div>
<div class="a" style="left:688.0px;top:381.3px;width:3.2px;height:5.5px;border:1px solid #0a0a0a"></div>
<div class="a" style="left:692.3px;top:375.5px;width:1px;height:13.0px;background:#2a2a2a"></div>
<div class="a" style="left:694.3px;top:379.5px;width:3px;height:3px;border-radius:50%;background:#d0202a"></div>
<div class="a" style="left:694.3px;top:382.0px;width:3.5px;height:3.5px;border-radius:50%;background:#0a0a0a"></div>
<div class="t" style="left:698.3px;top:377.8px;font-size:8.8px;color:#f0f0f0">S</div>
<div class="a" style="left:0;top:388.5px;width:107px;height:13.0px;background:#3e6cb3"></div>
<div class="a" style="left:162px;top:388.5px;width:28px;height:13.0px;background:#3e6cb3"></div>
<div class="a" style="left:0;top:401px;width:190px;height:1px;background:#616161"></div>
<svg class="a" style="left:6px;top:391.0px" width="10" height="9" viewBox="0 0 10 9"><path d="M0.5 0.5h8.5v8h-5.5C3 6.5 1.5 5.5 0.5 5.5z" fill="none" stroke="#ffffff" stroke-width="0.9"/><path d="M0.8 5.5C2.5 5.5 3.5 7 3.5 8.5" fill="none" stroke="#ffffff" stroke-width="0.9"/><path d="M4.5 2.5h3v4" fill="none" stroke="#ffffff" stroke-width="0.7"/></svg>
<div class="t" style="left:19px;top:392.1px;font-size:8.6px;color:#ffffff;letter-spacing:-0.05px">Kepala</div>
<div class="a" style="left:167.5px;top:393.5px;width:3px;height:3px;border-radius:50%;background:#ffffff"></div>
<div class="a" style="left:181.5px;top:393.5px;width:3px;height:3px;border-radius:50%;background:#ffffff"></div>
<div class="a" style="left:191px;top:388.5px;width:511px;height:13.0px;background:#656565"></div>
<div class="a" style="left:191px;top:401px;width:511px;height:1px;background:#363636"></div>
<div class="a" style="left:192px;top:395.0px;width:3.5px;height:3.5px;border-radius:50%;background:#0a0a0a"></div>
<div class="a" style="left:0;top:415px;width:190px;height:1px;background:#616161"></div>
<svg class="a" style="left:6px;top:404.0px" width="10" height="9" viewBox="0 0 10 9"><path d="M0.5 0.5h8.5v8h-5.5C3 6.5 1.5 5.5 0.5 5.5z" fill="none" stroke="#d8d8d8" stroke-width="0.9"/><path d="M0.8 5.5C2.5 5.5 3.5 7 3.5 8.5" fill="none" stroke="#d8d8d8" stroke-width="0.9"/><path d="M4.5 2.5h3v4" fill="none" stroke="#d8d8d8" stroke-width="0.7"/></svg>
<div class="t" style="left:19px;top:405.1px;font-size:8.6px;color:#d8d8d8;letter-spacing:-0.05px">Badan</div>
<div class="a" style="left:167.5px;top:406.5px;width:3px;height:3px;border-radius:50%;background:#111"></div>
<div class="a" style="left:181.5px;top:406.5px;width:3px;height:3px;border-radius:50%;background:#111"></div>
<div class="a" style="left:191px;top:401.5px;width:511px;height:14.0px;background:#656565"></div>
<div class="a" style="left:191px;top:415px;width:511px;height:1px;background:#363636"></div>
<div class="a" style="left:192px;top:408.0px;width:3.5px;height:3.5px;border-radius:50%;background:#0a0a0a"></div>
<div class="a" style="left:0;top:428px;width:190px;height:1px;background:#616161"></div>
<svg class="a" style="left:6px;top:418.0px" width="10" height="9" viewBox="0 0 10 9"><path d="M0.5 0.5h8.5v8h-5.5C3 6.5 1.5 5.5 0.5 5.5z" fill="none" stroke="#d8d8d8" stroke-width="0.9"/><path d="M0.8 5.5C2.5 5.5 3.5 7 3.5 8.5" fill="none" stroke="#d8d8d8" stroke-width="0.9"/><path d="M4.5 2.5h3v4" fill="none" stroke="#d8d8d8" stroke-width="0.7"/></svg>
<div class="t" style="left:19px;top:419.1px;font-size:8.6px;color:#d8d8d8;letter-spacing:-0.05px">Tangan_kiri</div>
<div class="a" style="left:167.5px;top:420.5px;width:3px;height:3px;border-radius:50%;background:#111"></div>
<div class="a" style="left:181.5px;top:420.5px;width:3px;height:3px;border-radius:50%;background:#111"></div>
<div class="a" style="left:191px;top:415.5px;width:511px;height:13.0px;background:#656565"></div>
<div class="a" style="left:191px;top:428px;width:511px;height:1px;background:#363636"></div>
<div class="a" style="left:192px;top:422.0px;width:3.5px;height:3.5px;border-radius:50%;background:#0a0a0a"></div>
<div class="a" style="left:0;top:441px;width:190px;height:1px;background:#616161"></div>
<svg class="a" style="left:6px;top:431.0px" width="10" height="9" viewBox="0 0 10 9"><path d="M0.5 0.5h8.5v8h-5.5C3 6.5 1.5 5.5 0.5 5.5z" fill="none" stroke="#d8d8d8" stroke-width="0.9"/><path d="M0.8 5.5C2.5 5.5 3.5 7 3.5 8.5" fill="none" stroke="#d8d8d8" stroke-width="0.9"/><path d="M4.5 2.5h3v4" fill="none" stroke="#d8d8d8" stroke-width="0.7"/></svg>
<div class="t" style="left:19px;top:432.1px;font-size:8.6px;color:#d8d8d8;letter-spacing:-0.05px">Lengan_Kiri</div>
<div class="a" style="left:167.5px;top:433.5px;width:3px;height:3px;border-radius:50%;background:#111"></div>
<div class="a" style="left:181.5px;top:433.5px;width:3px;height:3px;border-radius:50%;background:#111"></div>
<div class="a" style="left:191px;top:428.5px;width:511px;height:13.0px;background:#656565"></div>
<div class="a" style="left:191px;top:441px;width:511px;height:1px;background:#363636"></div>
<div class="a" style="left:192px;top:435.0px;width:3.5px;height:3.5px;border-radius:50%;background:#0a0a0a"></div>
<div class="a" style="left:0;top:455px;width:190px;height:1px;background:#616161"></div>
<svg class="a" style="left:6px;top:444.0px" width="10" height="9" viewBox="0 0 10 9"><path d="M0.5 0.5h8.5v8h-5.5C3 6.5 1.5 5.5 0.5 5.5z" fill="none" stroke="#d8d8d8" stroke-width="0.9"/><path d="M0.8 5.5C2.5 5.5 3.5 7 3.5 8.5" fill="none" stroke="#d8d8d8" stroke-width="0.9"/><path d="M4.5 2.5h3v4" fill="none" stroke="#d8d8d8" stroke-width="0.7"/></svg>
<div class="t" style="left:19px;top:445.1px;font-size:8.6px;color:#d8d8d8;letter-spacing:-0.05px">Tangan_kanan</div>
<div class="a" style="left:167.5px;top:446.5px;width:3px;height:3px;border-radius:50%;background:#111"></div>
<div class="a" style="left:181.5px;top:446.5px;width:3px;height:3px;border-radius:50%;background:#111"></div>
<div class="a" style="left:191px;top:441.5px;width:511px;height:14.0px;background:#656565"></div>
<div class="a" style="left:191px;top:455px;width:511px;height:1px;background:#363636"></div>
<div class="a" style="left:192px;top:448.0px;width:3.5px;height:3.5px;border-radius:50%;background:#0a0a0a"></div>
<div class="a" style="left:0;top:468px;width:190px;height:1px;background:#616161"></div>
<svg class="a" style="left:6px;top:458.0px" width="10" height="9" viewBox="0 0 10 9"><path d="M0.5 0.5h8.5v8h-5.5C3 6.5 1.5 5.5 0.5 5.5z" fill="none" stroke="#d8d8d8" stroke-width="0.9"/><path d="M0.8 5.5C2.5 5.5 3.5 7 3.5 8.5" fill="none" stroke="#d8d8d8" stroke-width="0.9"/><path d="M4.5 2.5h3v4" fill="none" stroke="#d8d8d8" stroke-width="0.7"/></svg>
<div class="t" style="left:19px;top:459.1px;font-size:8.6px;color:#d8d8d8;letter-spacing:-0.05px">Lengan_kanan</div>
<div class="a" style="left:167.5px;top:460.5px;width:3px;height:3px;border-radius:50%;background:#111"></div>
<div class="a" style="left:181.5px;top:460.5px;width:3px;height:3px;border-radius:50%;background:#111"></div>
<div class="a" style="left:191px;top:455.5px;width:511px;height:13.0px;background:#656565"></div>
<div class="a" style="left:191px;top:468px;width:511px;height:1px;background:#363636"></div>
<div class="a" style="left:192px;top:462.0px;width:3.5px;height:3.5px;border-radius:50%;background:#0a0a0a"></div>
<div class="a" style="left:0;top:481px;width:190px;height:1px;background:#616161"></div>
<svg class="a" style="left:6px;top:471.0px" width="10" height="9" viewBox="0 0 10 9"><path d="M0.5 0.5h8.5v8h-5.5C3 6.5 1.5 5.5 0.5 5.5z" fill="none" stroke="#d8d8d8" stroke-width="0.9"/><path d="M0.8 5.5C2.5 5.5 3.5 7 3.5 8.5" fill="none" stroke="#d8d8d8" stroke-width="0.9"/><path d="M4.5 2.5h3v4" fill="none" stroke="#d8d8d8" stroke-width="0.7"/></svg>
<div class="t" style="left:19px;top:472.1px;font-size:8.6px;color:#d8d8d8;letter-spacing:-0.05px">Kaki_kiri</div>
<div class="a" style="left:167.5px;top:473.5px;width:3px;height:3px;border-radius:50%;background:#111"></div>
<div class="a" style="left:181.5px;top:473.5px;width:3px;height:3px;border-radius:50%;background:#111"></div>
<div class="a" style="left:191px;top:468.5px;width:511px;height:13.0px;background:#656565"></div>
<div class="a" style="left:191px;top:481px;width:511px;height:1px;background:#363636"></div>
<div class="a" style="left:192px;top:475.0px;width:3.5px;height:3.5px;border-radius:50%;background:#0a0a0a"></div>
<div class="a" style="left:0;top:494px;width:190px;height:1px;background:#616161"></div>
<svg class="a" style="left:6px;top:484.0px" width="10" height="9" viewBox="0 0 10 9"><path d="M0.5 0.5h8.5v8h-5.5C3 6.5 1.5 5.5 0.5 5.5z" fill="none" stroke="#d8d8d8" stroke-width="0.9"/><path d="M0.8 5.5C2.5 5.5 3.5 7 3.5 8.5" fill="none" stroke="#d8d8d8" stroke-width="0.9"/><path d="M4.5 2.5h3v4" fill="none" stroke="#d8d8d8" stroke-width="0.7"/></svg>
<div class="t" style="left:19px;top:485.1px;font-size:8.6px;color:#d8d8d8;letter-spacing:-0.05px">Kaki_Kanan</div>
<div class="a" style="left:167.5px;top:486.5px;width:3px;height:3px;border-radius:50%;background:#111"></div>
<div class="a" style="left:181.5px;top:486.5px;width:3px;height:3px;border-radius:50%;background:#111"></div>
<div class="a" style="left:191px;top:481.5px;width:511px;height:13.0px;background:#656565"></div>
<div class="a" style="left:191px;top:494px;width:511px;height:1px;background:#363636"></div>
<div class="a" style="left:192px;top:488.0px;width:3.5px;height:3.5px;border-radius:50%;background:#0a0a0a"></div>
<svg class="a" style="left:107px;top:361.5px" width="55" height="133" viewBox="107 361.5 55 133"><path d="M115 408.5 C125 408.5 122 395.0 133 395.0" fill="none" stroke="#8aa030" stroke-width="1.2"/><path d="M137 395.0 C150 395.0 145 382.0 155 382.0" fill="none" stroke="#40c0d8" stroke-width="1.2"/><path d="M115 408.5 C120 408.5 120.5 412.5 120.5 417.5 L120.5 428.0 C120.5 435.0 126 435.0 133 435.0" fill="none" stroke="#86a020" stroke-width="1.3"/><path d="M115 408.5 C120 408.5 120.5 412.5 120.5 417.5 L120.5 455.0 C120.5 462.0 126 462.0 133 462.0" fill="none" stroke="#86a020" stroke-width="1.3"/><path d="M115 408.5 C120 408.5 120.5 412.5 120.5 417.5 L120.5 468.0 C120.5 475.0 126 475.0 133 475.0" fill="none" stroke="#86a020" stroke-width="1.3"/><path d="M115 408.5 C120 408.5 120.5 412.5 120.5 417.5 L120.5 481.0 C120.5 488.0 126 488.0 133 488.0" fill="none" stroke="#86a020" stroke-width="1.3"/><path d="M137 435.0 C150 435.0 145 422.0 155 422.0" fill="none" stroke="#e09040" stroke-width="1.2"/><path d="M137 462.0 C150 462.0 145 448.5 155 448.5" fill="none" stroke="#c02020" stroke-width="1.2"/><rect x="110.5" y="363.65000000000003" width="4.5" height="9.5" fill="#9a40d0"/><rect x="155" y="377.15000000000003" width="4.5" height="9.5" fill="#b040e0"/><rect x="133" y="390.15000000000003" width="4.5" height="9.5" fill="#20e0e8"/><rect x="110.5" y="403.85" width="5" height="9.5" fill="#7aa020"/><rect x="155" y="417.15000000000003" width="4.5" height="9.5" fill="#e858e8"/><rect x="133" y="430.15000000000003" width="4.5" height="9.5" fill="#f08a28"/><rect x="155" y="443.65000000000003" width="4.5" height="9.5" fill="#18a090"/><rect x="133" y="457.35" width="5" height="9.5" rx="1.5" fill="#e81818"/><rect x="133" y="470.15000000000003" width="4.5" height="9.5" fill="#f06060"/><rect x="133" y="483.15000000000003" width="4.5" height="9.5" fill="#20e0f0"/></svg>
<!-- tools strip -->
<div class="a" style="left:712px;top:11px;width:1.5px;height:511px;background:#353535"></div>
<div class="a" style="left:713.5px;top:20px;width:27.5px;height:502px;background:#4f4f4f"></div>
<div class="a" style="left:716px;top:20px;width:1px;height:502px;background:#525252"></div>
<div class="a" style="left:738px;top:20px;width:1px;height:502px;background:#474747"></div>
<div class="a" style="left:741px;top:11px;width:2px;height:511px;background:#3a3a3a"></div>
<div class="a" style="left:721px;top:23px;width:14px;height:1px;background:repeating-linear-gradient(90deg,#6a6a6a 0 1px,transparent 1px 3px)"></div>
<div class="a" style="left:721px;top:48px;width:14px;height:1px;background:repeating-linear-gradient(90deg,#6a6a6a 0 1px,transparent 1px 3px)"></div>
<div class="a" style="left:721px;top:78px;width:14px;height:1px;background:repeating-linear-gradient(90deg,#6a6a6a 0 1px,transparent 1px 3px)"></div>
<div class="a" style="left:721px;top:150px;width:14px;height:1px;background:repeating-linear-gradient(90deg,#6a6a6a 0 1px,transparent 1px 3px)"></div>
<div class="a" style="left:721px;top:180px;width:14px;height:1px;background:repeating-linear-gradient(90deg,#6a6a6a 0 1px,transparent 1px 3px)"></div>
<div class="a" style="left:721px;top:210px;width:14px;height:1px;background:repeating-linear-gradient(90deg,#6a6a6a 0 1px,transparent 1px 3px)"></div>
<div class="a" style="left:713px;top:70.5px;width:28px;height:1px;background:#3c3c3c"></div>
<div class="a" style="left:713px;top:141px;width:28px;height:1px;background:#3c3c3c"></div>
<div class="a" style="left:713px;top:171px;width:28px;height:1px;background:#3c3c3c"></div>
<div class="a" style="left:713px;top:201px;width:28px;height:1px;background:#3c3c3c"></div>
<div class="a" style="left:713px;top:231px;width:28px;height:1px;background:#3c3c3c"></div>
<svg class="a" style="left:719px;top:30px" width="16" height="13" viewBox="0 0 16 13"><path d="M8 1C3 1 0.5 4 0.5 7c0 3 3 5.5 7 5.5 2 0 2-1.5 1.5-2.5-0.5-1 0-2 1.5-2h2.5c2 0 2.5-1.5 2.5-3C15.5 3 12 1 8 1z" fill="#d6d6d6"/><circle cx="4" cy="8" r="1.1" fill="#4d4d4d"/><circle cx="6" cy="10.3" r="1.1" fill="#4d4d4d"/><circle cx="5" cy="5" r="1.1" fill="#4d4d4d"/><circle cx="8.5" cy="3.5" r="1.1" fill="#4d4d4d"/><circle cx="12" cy="4.5" r="1.1" fill="#4d4d4d"/></svg>
<svg class="a" style="left:721px;top:52px" width="13" height="11" viewBox="0 0 13 11"><rect x="0.5" y="0.5" width="12" height="10" fill="#d0d0d0"/><path d="M0.5 5.5h12M6.5 0.5v10M3.5 0.5v10" stroke="#4d4d4d" stroke-width="1"/></svg>
<svg class="a" style="left:721px;top:80px" width="13" height="14" viewBox="0 0 13 14"><path d="M1 0.5v13" stroke="#d6d6d6" stroke-width="1.3"/><rect x="2.5" y="2.5" width="6" height="4" fill="#d6d6d6"/><rect x="2.5" y="8" width="10" height="4" fill="#d6d6d6"/></svg>
<svg class="a" style="left:720.5px;top:101px" width="14" height="14" viewBox="0 0 14 14"><circle cx="7" cy="7" r="6.5" fill="#d6d6d6"/><rect x="6" y="6" width="2" height="5" fill="#4d4d4d"/><circle cx="7" cy="3.8" r="1.1" fill="#4d4d4d"/></svg>
<svg class="a" style="left:721px;top:122px" width="13" height="13" viewBox="0 0 13 13"><rect x="2" y="2" width="9" height="9" fill="none" stroke="#d6d6d6" stroke-width="1" stroke-dasharray="1.5 1"/><path d="M0 2h3M10 2h3M0 11h3M10 11h3M2 0v3M2 10v3M11 0v3M11 10v3" stroke="#d6d6d6" stroke-width="1"/></svg>
<svg class="a" style="left:720px;top:152px" width="14" height="14" viewBox="0 0 14 14"><circle cx="3.5" cy="10.5" r="3" fill="#d0d0d0"/><circle cx="8.5" cy="6.5" r="2.2" fill="#d0d0d0"/><circle cx="12" cy="2.5" r="1.6" fill="#d0d0d0"/></svg>
<svg class="a" style="left:719.5px;top:183px" width="15" height="12" viewBox="0 0 15 12"><path d="M4 11C1.5 11 0.5 9 0.5 7.5 0.5 5.5 2 4 4 4 4.5 2 6 0.8 8 0.8c2.5 0 4 2 4 3.7 1.5 0.3 2.5 1.5 2.5 3 0 2-1.5 3.5-3.5 3.5z" fill="none" stroke="#d6d6d6" stroke-width="1.2"/><path d="M4 8c1.5-3 4-3 5.5 0s3.5 1 3-1" fill="none" stroke="#d6d6d6" stroke-width="1.1"/></svg>
<svg class="a" style="left:721px;top:213px" width="13" height="13" viewBox="0 0 13 13"><path d="M1 0.5v12h11.5" fill="none" stroke="#d6d6d6" stroke-width="1.2"/><path d="M2.5 10.5l6-5" stroke="#d6d6d6" stroke-width="1.2"/><path d="M6.5 4h4.5v4.5z" fill="#d6d6d6"/></svg>
<!-- properties panel -->
<div class="a" style="left:743px;top:20px;width:215px;height:502px;background:#535353"></div>
<div class="a" style="left:743px;top:20px;width:215px;height:12px;background:#3e3e3e"></div>
<div class="a" style="left:743px;top:20px;width:45px;height:12px;background:#535353"></div>
<div class="a" style="left:788px;top:20px;width:35px;height:12px;background:#464646"></div>
<div class="t" style="left:747px;top:22px;font-size:8.3px;color:#f0f0f0;font-weight:bold;letter-spacing:-0.45px">Properties</div>
<div class="t" style="left:794px;top:22px;font-size:8.3px;color:#bdbdbd;letter-spacing:-0.2px">Library</div>
<div class="a" style="left:950px;top:23px;width:8px;height:1.2px;background:#ccc;box-shadow:0 2.5px 0 #ccc,0 5px 0 #ccc"></div>
<svg class="a" style="left:762px;top:48px" width="15" height="16" viewBox="0 0 15 16"><path d="M1 3.2h13M1 12.6h13" stroke="#dcdcdc" stroke-width="1.2"/><path d="M2.5 3v9.6M12.5 3v9.6" stroke="#dcdcdc" stroke-width="1.3"/><path d="M5 3.5v9M10 3.5v9" stroke="#bdbdbd" stroke-width="0.8"/><path d="M7.5 0.5v15" stroke="#e6e6e6" stroke-width="1.6"/><circle cx="7.5" cy="10.8" r="1" fill="#111"/></svg>
<div class="t" style="left:797px;top:41px;font-size:8.8px;color:#d6d6d6;letter-spacing:-0.2px">Frame</div>
<svg class="a" style="left:946px;top:40px" width="13" height="13" viewBox="0 0 13 13"><circle cx="6.5" cy="6.5" r="5.5" fill="none" stroke="#d6d6d6" stroke-width="1.3"/><path d="M4 9l5-5M5 4h4v4" fill="none" stroke="#d6d6d6" stroke-width="1.3"/></svg>
<div class="a" style="left:743px;top:78px;width:215px;height:1px;background:#444"></div><div class="a" style="left:743px;top:79px;width:215px;height:1px;background:#5a5a5a"></div>
<svg class="a" style="left:746px;top:84px" width="7" height="5" viewBox="0 0 7 5"><path d="M0 0h7L3.5 4.5z" fill="#d6d6d6"/></svg>
<div class="t" style="left:757px;top:81.5px;font-size:8.8px;color:#d8d8d8">Color Effect</div>
<div class="t" style="left:752px;width:40px;text-align:right;top:101.2px;font-size:8.5px;color:#d0d0d0">Style:</div>
<div class="a" style="left:797px;top:99px;width:101px;height:13px;background:#434343"></div>
<div class="t" style="left:801px;top:101.5px;font-size:8.8px;color:#ececec">None</div>
<svg class="a" style="left:889px;top:104px" width="7" height="5" viewBox="0 0 7 5"><path d="M1 1l2.5 2.5L6 1" fill="none" stroke="#cfcfcf" stroke-width="1"/></svg>
<div class="a" style="left:743px;top:121px;width:215px;height:1px;background:#444"></div><div class="a" style="left:743px;top:122px;width:215px;height:1px;background:#5a5a5a"></div>
<svg class="a" style="left:746px;top:127px" width="7" height="5" viewBox="0 0 7 5"><path d="M0 0h7L3.5 4.5z" fill="#d6d6d6"/></svg>
<div class="t" style="left:757px;top:124.5px;font-size:8.8px;color:#d8d8d8">Label</div>
<div class="t" style="left:751px;width:40px;text-align:right;top:145.0px;font-size:8.5px;color:#d0d0d0">Name:</div>
<div class="a" style="left:796px;top:142.5px;width:145px;height:11.5px;background:#3d3d3d;border-radius:1px"></div>
<div class="t" style="left:751px;width:40px;text-align:right;top:163.7px;font-size:8.5px;color:#d0d0d0">Type:</div>
<div class="a" style="left:796px;top:160px;width:145px;height:15px;background:#4d4d4d"></div>
<div class="t" style="left:800px;top:162.5px;font-size:8.8px;color:#6a6a6a">None</div>
<svg class="a" style="left:932px;top:165px" width="7" height="5" viewBox="0 0 7 5"><path d="M1 1l2.5 2.5L6 1" fill="none" stroke="#6a6a6a" stroke-width="1"/></svg>
<div class="a" style="left:743px;top:184px;width:215px;height:1px;background:#444"></div><div class="a" style="left:743px;top:185px;width:215px;height:1px;background:#5a5a5a"></div>
<svg class="a" style="left:746px;top:189.5px" width="7" height="5" viewBox="0 0 7 5"><path d="M0 0h7L3.5 4.5z" fill="#d6d6d6"/></svg>
<div class="t" style="left:757px;top:187.0px;font-size:8.8px;color:#d8d8d8">Sound</div>
<div class="t" style="left:752px;width:40px;text-align:right;top:206.7px;font-size:8.5px;color:#d0d0d0">Name:</div>
<div class="a" style="left:800px;top:204px;width:141px;height:13px;background:#434343"></div>
<div class="t" style="left:804px;top:206.5px;font-size:8.8px;color:#ececec">None</div>
<svg class="a" style="left:932px;top:209px" width="7" height="5" viewBox="0 0 7 5"><path d="M1 1l2.5 2.5L6 1" fill="none" stroke="#cfcfcf" stroke-width="1"/></svg>
<div class="a" style="left:743px;top:219px;width:215px;height:1px;background:#4c4c4c"></div>
<div class="t" style="left:752px;width:40px;text-align:right;top:227.2px;font-size:8.5px;color:#d0d0d0">Effect:</div>
<div class="a" style="left:800px;top:225px;width:121px;height:15px;background:#4d4d4d"></div>
<div class="t" style="left:804px;top:227.5px;font-size:8.8px;color:#6a6a6a">None</div>
<svg class="a" style="left:912px;top:230px" width="7" height="5" viewBox="0 0 7 5"><path d="M1 1l2.5 2.5L6 1" fill="none" stroke="#6a6a6a" stroke-width="1"/></svg>
<svg class="a" style="left:928px;top:226px" width="10" height="10" viewBox="0 0 10 10"><path d="M1 9l1.5-3.5 5-5 2 2-5 5z" fill="#6a6a6a"/></svg>
<div class="a" style="left:743px;top:242px;width:215px;height:1px;background:#4c4c4c"></div>
<div class="t" style="left:752px;width:40px;text-align:right;top:248.7px;font-size:8.5px;color:#d0d0d0">Sync:</div>
<div class="a" style="left:800px;top:245px;width:141px;height:15px;background:#4d4d4d"></div>
<div class="t" style="left:804px;top:247.5px;font-size:8.8px;color:#6a6a6a">Event</div>
<svg class="a" style="left:932px;top:250px" width="7" height="5" viewBox="0 0 7 5"><path d="M1 1l2.5 2.5L6 1" fill="none" stroke="#6a6a6a" stroke-width="1"/></svg>
<div class="a" style="left:800px;top:265px;width:95px;height:15px;background:#4d4d4d"></div>
<div class="t" style="left:804px;top:267.5px;font-size:8.8px;color:#6a6a6a">Repeat</div>
<svg class="a" style="left:886px;top:270px" width="7" height="5" viewBox="0 0 7 5"><path d="M1 1l2.5 2.5L6 1" fill="none" stroke="#6a6a6a" stroke-width="1"/></svg>
<div class="t" style="left:901px;top:268.5px;font-size:9px;color:#dcdcdc">x</div>
<div class="a" style="left:916px;top:267px;width:1px;height:7px;background:#6a6a6a"></div><div class="a" style="left:916px;top:276px;width:1px;height:1px;background:#6a6a6a"></div>
<div class="t" style="left:796px;top:293.5px;font-size:8.8px;color:#d8d8d8">No sound selected</div>
<div class="a" style="left:743px;top:308px;width:215px;height:1px;background:#444"></div><div class="a" style="left:743px;top:309px;width:215px;height:1px;background:#5a5a5a"></div>
<svg class="a" style="left:746px;top:313.5px" width="7" height="5" viewBox="0 0 7 5"><path d="M0 0h7L3.5 4.5z" fill="#d6d6d6"/></svg>
<div class="t" style="left:757px;top:311.0px;font-size:8.8px;color:#d8d8d8">Filters</div>
<div class="a" style="left:747px;top:327.5px;width:30px;height:15px;border:1px solid #444;background:#4e4e4e;border-radius:1px"></div>
<div class="a" style="left:777px;top:327.5px;width:16px;height:15px;border:1px solid #444;background:#4e4e4e;border-radius:1px"></div>
<svg class="a" style="left:750px;top:330px" width="10" height="10" viewBox="0 0 10 10"><path d="M5 1v8M1 5h8" stroke="#e0e0e0" stroke-width="2"/></svg>
<svg class="a" style="left:766px;top:333px" width="7" height="5" viewBox="0 0 7 5"><path d="M1 1l2.5 2.5L6 1" fill="none" stroke="#cfcfcf" stroke-width="1"/></svg>
<div class="a" style="left:781px;top:335px;width:8px;height:1.3px;background:#777"></div>
<div class="a" style="left:930px;top:327.5px;width:30px;height:15px;border:1px solid #444;background:#4e4e4e;border-radius:1px"></div>
<svg class="a" style="left:933px;top:329px" width="12" height="12" viewBox="0 0 12 12"><circle cx="6" cy="6" r="3.8" fill="none" stroke="#e0e0e0" stroke-width="2.4"/><path d="M6 0.5v2.5M6 9v2.5M0.5 6h2.5M9 6h2.5M2 2l1.8 1.8M8.2 8.2L10 10M2 10l1.8-1.8M8.2 3.8L10 2" stroke="#e0e0e0" stroke-width="1.6"/></svg>
<svg class="a" style="left:948px;top:333px" width="7" height="5" viewBox="0 0 7 5"><path d="M1 1l2.5 2.5L6 1" fill="none" stroke="#cfcfcf" stroke-width="1"/></svg>
<div class="a" style="left:743px;top:346px;width:215px;height:15px;background:#535353"></div>
<div class="t" style="left:747px;top:350.5px;font-size:8.8px;color:#d0d0d0">Property</div>
<div class="a" style="left:847px;top:348px;width:1px;height:11px;background:#6a6a6a"></div>
<div class="t" style="left:851px;top:350.5px;font-size:8.8px;color:#d0d0d0">Value</div>
<div class="a" style="left:950px;top:348px;width:1px;height:11px;background:#6a6a6a"></div>
<div class="a" style="left:743px;top:361px;width:215px;height:1.2px;background:#474747"></div>
<!-- context menu -->
<div class="a" style="left:217px;top:107.5px;width:219px;height:430px;background:#f0f0f0;border:1px solid #d4d4d4;box-shadow:1px 1px 2px rgba(0,0,0,0.25)"></div>
<div class="a" style="left:219px;top:142px;width:215px;height:15.5px;background:#9ac8f4"></div>
<div class="t" style="left:243px;top:114.3px;font-size:9.2px;letter-spacing:-0.15px;color:#1b1b1b">Create Motion Tween</div>
<div class="t" style="left:243px;top:129.8px;font-size:9.2px;letter-spacing:-0.15px;color:#8c8c8c">Create Shape Tween</div>
<div class="t" style="left:243px;top:145.5px;font-size:9.2px;letter-spacing:-0.15px;color:#1a2438">Create Classic Tween</div>
<div class="t" style="left:243px;top:161.8px;font-size:9.2px;letter-spacing:-0.15px;color:#1b1b1b">Convert to Frame-by-Frame Animation</div>
<div class="a" style="left:240px;top:177px;width:192px;height:1px;background:#d6d6d6"></div>
<div class="t" style="left:243px;top:183.7px;font-size:9.2px;letter-spacing:-0.15px;color:#1b1b1b">Insert Frame</div>
<div class="t" style="left:243px;top:199.6px;font-size:9.2px;letter-spacing:-0.15px;color:#1b1b1b">Remove Frames</div>
<div class="a" style="left:240px;top:214px;width:192px;height:1px;background:#d6d6d6"></div>
<div class="t" style="left:243px;top:220.7px;font-size:9.2px;letter-spacing:-0.15px;color:#1b1b1b">Insert Keyframe</div>
<div class="t" style="left:243px;top:236.8px;font-size:9.2px;letter-spacing:-0.15px;color:#1b1b1b">Insert Blank Keyframe</div>
<div class="t" style="left:243px;top:252.9px;font-size:9.2px;letter-spacing:-0.15px;color:#8c8c8c">Clear Keyframe</div>
<div class="t" style="left:243px;top:269.0px;font-size:9.2px;letter-spacing:-0.15px;color:#1b1b1b">Convert to Keyframes</div>
<div class="t" style="left:243px;top:285.2px;font-size:9.2px;letter-spacing:-0.15px;color:#1b1b1b">Convert to Blank Keyframes</div>
<div class="a" style="left:240px;top:300px;width:192px;height:1px;background:#d6d6d6"></div>
<div class="t" style="left:243px;top:307.2px;font-size:9.2px;letter-spacing:-0.15px;color:#1b1b1b">Cut Frames</div>
<div class="t" style="left:243px;top:323.4px;font-size:9.2px;letter-spacing:-0.15px;color:#1b1b1b">Copy Frames</div>
<div class="t" style="left:243px;top:339.6px;font-size:9.2px;letter-spacing:-0.15px;color:#8c8c8c">Paste Frames</div>
<div class="t" style="left:243px;top:355.7px;font-size:9.2px;letter-spacing:-0.15px;color:#8c8c8c">Paste and Overwrite Frames</div>
<div class="t" style="left:243px;top:371.9px;font-size:9.2px;letter-spacing:-0.15px;color:#1b1b1b">Clear Frames</div>
<div class="t" style="left:243px;top:388.1px;font-size:9.2px;letter-spacing:-0.15px;color:#1b1b1b">Select All Frames</div>
<div class="a" style="left:240px;top:402.5px;width:192px;height:1px;background:#d6d6d6"></div>
<div class="t" style="left:243px;top:409.7px;font-size:9.2px;letter-spacing:-0.15px;color:#8c8c8c">Copy Motion</div>
<div class="t" style="left:243px;top:425.9px;font-size:9.2px;letter-spacing:-0.15px;color:#8c8c8c">Paste Motion</div>
<div class="t" style="left:243px;top:442.0px;font-size:9.2px;letter-spacing:-0.15px;color:#8c8c8c">Paste Motion Special...</div>
<div class="a" style="left:240px;top:456.5px;width:192px;height:1px;background:#d6d6d6"></div>
<div class="t" style="left:243px;top:463.4px;font-size:9.2px;letter-spacing:-0.15px;color:#8c8c8c">Reverse Frames</div>
<div class="t" style="left:243px;top:479.5px;font-size:9.2px;letter-spacing:-0.15px;color:#8c8c8c">Synchronize Symbols</div>
<div class="t" style="left:243px;top:495.7px;font-size:9.2px;letter-spacing:-0.15px;color:#8c8c8c">Split Audio</div>
<div class="a" style="left:240px;top:510.5px;width:192px;height:1px;background:#d6d6d6"></div>
<div class="t" style="left:243px;top:516.4px;font-size:9.2px;letter-spacing:-0.15px;color:#1b1b1b">Actions</div>
<svg class="a" style="left:422px;top:162px" width="6" height="8" viewBox="0 0 6 8"><path d="M1.5 1l3 3-3 3" fill="none" stroke="#555" stroke-width="1.2"/></svg>
<svg class="a" style="left:268.5px;top:152.5px" width="11" height="16" viewBox="0 0 11 16"><path d="M0.7 0.7v11.5l2.8-2.6 2.2 4.8 1.7-0.8-2.1-4.6h4z" fill="#fff" stroke="#1a1a1a" stroke-width="0.9"/></svg>
</body></html>
